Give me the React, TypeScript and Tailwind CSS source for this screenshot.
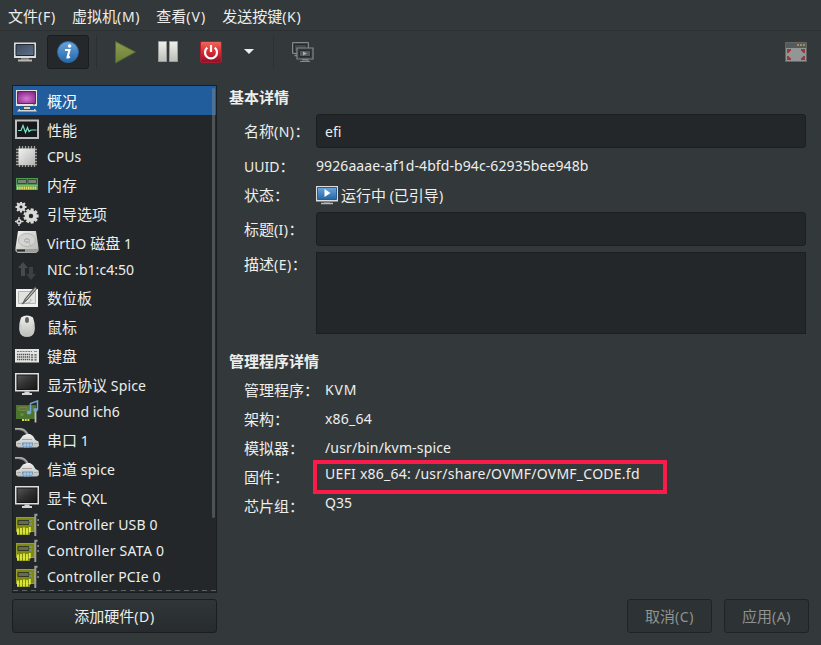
import React from "react";

const FONT = "font-['Noto_Sans','Noto_Sans_CJK_SC',sans-serif]";

/* Latin runs are set slightly smaller than the Chinese runs next to them. */
function T({ children, className = "" }: { children: string; className?: string }) {
  const runs = children.split(/([\u3000-\u303f\u4e00-\u9fff\uff00-\uffef]+)/).filter(Boolean);
  return (
    <span className={`whitespace-pre text-[14px] ${className}`}>
      {runs.map((r, i) =>
        /[\u4e00-\u9fff\uff00-\uffef]/.test(r) ? (
          <span key={i} className="text-[15px] tracking-normal leading-none">{r}</span>
        ) : (
          <React.Fragment key={i}>{r}</React.Fragment>
        ),
      )}
    </span>
  );
}

function Svg({ children, className = "size-6", box = "0 0 24 24" }: { children: React.ReactNode; className?: string; box?: string }) {
  return (
    <svg viewBox={box} className={`shrink-0 ${className}`} fill="none">
      {children}
    </svg>
  );
}

function Defs() {
  return (
    <svg className="absolute size-0">
      <defs>
        <radialGradient id="pink" cx=".5" cy=".6" r=".7"><stop stopColor="#d878d4" /><stop offset="1" stopColor="#7d2380" /></radialGradient>
        <linearGradient id="silver" x1="0" y1="0" x2="1" y2="1"><stop stopColor="#f2f2f0" /><stop offset="1" stopColor="#b4b4b2" /></linearGradient>
        <linearGradient id="down" x1="0" y1="0" x2="0" y2="1"><stop stopColor="#f0f0ee" /><stop offset="1" stopColor="#bdbdb9" /></linearGradient>
        <linearGradient id="black" x1="0" y1="0" x2="1" y2="1"><stop stopColor="#555" /><stop offset=".5" stopColor="#303030" /><stop offset="1" stopColor="#181818" /></linearGradient>
        <linearGradient id="slate" x1="0" y1="0" x2="1" y2="1"><stop stopColor="#3c4a5e" /><stop offset="1" stopColor="#60728c" /></linearGradient>
        <linearGradient id="blue" x1="0" y1="0" x2="0" y2="1"><stop stopColor="#6ba4dd" /><stop offset="1" stopColor="#2467a8" /></linearGradient>
        <linearGradient id="red" x1="0" y1="0" x2="0" y2="1"><stop stopColor="#ee6a5a" /><stop offset=".5" stopColor="#dc2b32" /><stop offset="1" stopColor="#86102e" /></linearGradient>
        <linearGradient id="olive" x1="0" y1="0" x2="0" y2="1"><stop stopColor="#8e9c50" /><stop offset="1" stopColor="#6c8038" /></linearGradient>
      </defs>
    </svg>
  );
}

function gear(cx: number, cy: number, r: number, n: number, tooth: number) {
  return (
    <g stroke="#d9d9d7">
      {Array.from({ length: n }, (_, i) => {
        const a = (i * 2 * Math.PI) / n;
        return <line key={i} x1={cx + r * Math.cos(a)} y1={cy + r * Math.sin(a)} x2={cx + (r + tooth) * Math.cos(a)} y2={cy + (r + tooth) * Math.sin(a)} strokeWidth={r * 0.6} />;
      })}
      <circle cx={cx} cy={cy} r={r * 0.8} strokeWidth={r * 0.75} />
    </g>
  );
}

const BlackScreen = () => (
  <Svg>
    <rect x="0" y="0" width="24" height="18.500" fill="#dededc" />
    <rect x="1.500" y="1.500" width="21" height="15.500" fill="#171717" />
    <rect x="2.500" y="2.500" width="19" height="13.500" fill="url(#black)" />
    <path d="M9.500 18.500h5v1.500h2.500v2h-10v-2h2.500z" fill="#d5d5d3" />
  </Svg>
);

const Card = () => (
  <Svg>
    <path d="M1 4h19v15h-5v3H2v-3H1z" fill="#7f8911" />
    <path d="M1.500 4.500h18v14h-18z" stroke="#97a129" />
    <path d="M3 7.500h11v4H3z" fill="#666b55" stroke="#343a22" />
    <path d="M14 8h3M14 11h3" stroke="#6b91b5" strokeWidth="1.500" />
    <path d="M3 21.500V15.500M6 21.500V15M9 21.500V14.500M12 21.500V15M14.800 19.500V14" stroke="#e4ee39" strokeWidth="1.800" />
    <path d="M22.500 1.700h-2.200V23" stroke="#9b9c9a" strokeWidth="2" />
    <path d="M22.300 7h1.700M22.300 12h1.700" stroke="#a0a0a0" strokeWidth="1.500" />
  </Svg>
);

const Plug = () => (
  <Svg>
    <path d="M0 1C7 0 11 2 13 8" stroke="#858785" strokeWidth="2.600" />
    <path d="M0 .7C7 0 11 2 13 7" stroke="#bcbdbb" />
    <path d="M8 7.500l4-1.500h3l3 2 2.500 4 3 1.500.5 4.500-2 1.500H3L1 18v-4.500L4.500 12z" fill="url(#down)" />
    <path d="M7 11.500h10M2 15.500h4M19 15.500h3.500" stroke="#a5a8a6" />
    <path d="M7 14.500h11v2.500l-2 2.500H9L7 17z" fill="#6b97c3" />
    <path d="M8 17h9M10 15v4.500M13 15v4.500M16 15v3.500" stroke="#c4dbef" strokeWidth=".8" />
  </Svg>
);

const ICONS: Record<string, React.ReactNode> = {
  overview: (
    <Svg>
      <path d="M1 1h21v16H1z" fill="#e2e2df" /><path d="M2.500 2.500h18v12h-18z" fill="url(#pink)" stroke="#63236a" />
      <path d="M9 18h6v2h5l2 2.500H2L4 20h5z" fill="#d6d6d2" /><path d="M9 17.500h6M5 20.500h14" stroke="#4b4f50" />
      <path d="M18 15.800h2" stroke="#5a9b45" />
    </Svg>
  ),
  performance: (
    <Svg>
      <path d="M0 1.500h24v19.500H0z" fill="#bdbebc" /><path d="M2 3.500h20v15.500H2z" fill="#15191b" />
      <path d="M3 12.500h3l2-5 2.500 7 2-5 1.500 4 2-1.500h5.500" stroke="#7de3c5" strokeWidth="1.200" />
    </Svg>
  ),
  cpu: (
    <Svg>
      <path d="M4.500 1v21M7.500 1v21M10.500 1v21M13.500 1v21M16.500 1v21M19.500 1v21M1 4.500h21M1 7.500h21M1 10.500h21M1 13.500h21M1 16.500h21M1 19.500h21" stroke="#a0a2a1" strokeWidth="1.300" />
      <path d="M3.500 3.500h16.500V20H3.500z" fill="url(#silver)" />
    </Svg>
  ),
  memory: (
    <Svg>
      <path d="M1 5h22v12H1z" fill="#4f9a52" /><path d="M2.500 6.500h9v4h-9zM13 6.500h8.500v4H13z" fill="#7b8178" stroke="#394c38" />
      <path d="M2 15h20" stroke="#e6dc62" strokeWidth="3" strokeDasharray="1.500 .7" />
      <path d="M1 12.500h22" stroke="#94b34a" />
    </Svg>
  ),
  boot: (
    <Svg>{gear(6, 5, 3.500, 8, 2)}{gear(16, 14, 5.200, 9, 2.400)}{gear(4, 19.500, 2.200, 4, 2.300)}</Svg>
  ),
  disk: (
    <Svg>
      <path d="M3 0h18l2.500 17v3L21 22H3l-2.500-2v-3z" fill="url(#silver)" /><ellipse cx="12" cy="9" rx="8.500" ry="6.500" fill="#d4d4d2" stroke="#b4b5b3" />
      <ellipse cx="12" cy="9.500" rx="2.500" ry="1.700" stroke="#a1a2a0" /><path d="M14 11l2 4-5 1" stroke="#b9b9b7" />
      <path d="M1 18h22v2l-2 1.500H3L1 20z" fill="#9c9d9b" /><path d="M2 19.500h8" stroke="#282b2c" strokeWidth="2" />
    </Svg>
  ),
  network: (
    <Svg>
      <path d="M8 4l5 6h-3v8H6v-8H3z" fill="#474a4b" /><path d="M14 9h4v7h3l-5 6-5-6h3z" fill="#3d4041" />
    </Svg>
  ),
  tablet: (
    <Svg>
      <path d="M1 3h22v18H1z" fill="#f1f1ef" /><path d="M3.500 5.500h17v12h-17z" fill="#e2e3e0" stroke="#b4b7b0" />
      <path d="M6 17C14 19 18 14 15 13" stroke="#a7aaa5" /><path d="M20 0.800L10 13 7.500 18l4-3.500L22 2.500z" fill="#777b78" stroke="#454946" strokeWidth=".8" />
      <path d="M20.500 2.500L11 13.500" stroke="#c8ccc9" />
    </Svg>
  ),
  mouse: (
    <Svg>
      <path d="M6 2.500Q12-1.500 18 2.500 20 8 19.800 14 19.500 19 16.500 21 12 23 7.500 21 4.500 19 4.200 14 4 8 6 2.500z" fill="url(#down)" />
      <path d="M6 9q-1 10 3.500 12M18 9q1 10-3.500 12" stroke="#c9c9c7" /><ellipse cx="12" cy="5" rx="2" ry="3" fill="#606362" />
    </Svg>
  ),
  keyboard: (
    <Svg>
      <path d="M0 5h24v13.500H0z" fill="#e4e4e2" /><path d="M2 10.500h13M2 13h13M2 15.500h13" stroke="#535655" strokeWidth="1.700" strokeDasharray="1.400 .6" />
      <path d="M2 7.500h15" stroke="#737574" strokeDasharray="2 .8" /><path d="M19 7.500h3" stroke="#54ac4b" />
      <path d="M17 10v7M20.500 10v7" stroke="#747675" strokeWidth="2.200" strokeDasharray="1.800 .7" />
    </Svg>
  ),
  screen: <BlackScreen />,
  sound: (
    <Svg>
      <path d="M1 5h20v14H1z" fill="#4b752e" /><path d="M2 6h17v4H2z" fill="#5d7635" />
      <path d="M4 7.500h8v3H4z" stroke="#74824b" /><circle cx="7" cy="14.500" r="1.600" fill="#6a8b49" />
      <path d="M7 20h8" stroke="#dfd83c" strokeWidth="2" strokeDasharray="2 .7" /><path d="M20.500 11v11.500" stroke="#bdbfbd" strokeWidth="1.800" />
      <path d="M15.500 12V3.500L22.500 1v9" stroke="#72a7c9" strokeWidth="1.500" /><ellipse cx="14" cy="12.500" rx="2.300" ry="1.900" fill="#72a7c9" /><ellipse cx="20.500" cy="10" rx="2.300" ry="1.900" fill="#72a7c9" />
    </Svg>
  ),
  plug: <Plug />,
  card: <Card />,
};

const ROWS: [string, string, boolean, string][] = [
  ["overview", "概况", true, ""],
  ["performance", "性能", true, ""],
  ["cpu", "CPUs", false, ""],
  ["memory", "内存", true, ""],
  ["boot", "引导选项", true, ""],
  ["disk", "VirtIO 磁盘 1", true, "tracking-[0.15px]"],
  ["network", "NIC :b1:c4:50", false, "tracking-[0.05px]"],
  ["tablet", "数位板", true, ""],
  ["mouse", "鼠标", true, ""],
  ["keyboard", "键盘", true, ""],
  ["screen", "显示协议 Spice", true, "tracking-[0.15px]"],
  ["sound", "Sound ich6", false, ""],
  ["plug", "串口 1", true, ""],
  ["plug", "信道 spice", true, "tracking-[0.15px]"],
  ["screen", "显卡 QXL", true, "tracking-[0.1px]"],
  ["card", "Controller USB 0", false, "tracking-[0.15px]"],
  ["card", "Controller SATA 0", false, "tracking-[0.28px]"],
  ["card", "Controller PCIe 0", false, "tracking-[0.15px]"],
];

function Toolbar() {
  return (
    <div className="flex h-[42px] items-center border-t border-[#2c3032] pl-[14px] pr-[14px]">
      <Svg className="size-[22px]" box="0 0 22 22">
        <path d="M0 1.500h22V17H0z" fill="#dcdcda" /><path d="M2 3.500h18v11H2z" fill="url(#slate)" stroke="#23282f" />
        <path d="M7 17h8v2H7z" fill="#777" /><path d="M4 18.500h14v2H4z" fill="#b8b8b4" />
      </Svg>
      <div className="ml-[11px] flex h-[34px] w-[42px] items-center justify-center rounded-[3px] border border-[#1a1d1f] bg-[#24282a]">
        <Svg className="size-[22px]" box="0 0 22 22">
          <circle cx="11" cy="11" r="10.500" fill="url(#blue)" stroke="#2b68a5" />
          <circle cx="12.600" cy="5" r="1.800" fill="#fff" />
          <path d="M8 9h4.500L10.500 16.500q1 .3 2.300-1" stroke="#fff" strokeWidth="2.100" />
        </Svg>
      </div>
      <div className="ml-[7px] h-[34px] w-px bg-[#2c3032]" />
      <Svg className="ml-[17px] size-[24px]" box="0 0 24 24"><path d="M1.500 1.500V23L21.500 12z" fill="url(#olive)" stroke="#53672b" /></Svg>
      <Svg className="ml-[19px] size-[22px]" box="0 0 22 22"><path d="M1.500.5h8v20h-8zM12.500.5h8v20h-8z" fill="url(#down)" stroke="#9c9d9b" /></Svg>
      <Svg className="ml-[21px] size-[22px]" box="0 0 22 22">
        <rect x=".5" y=".5" width="21" height="21" rx="1.500" fill="url(#red)" stroke="#ab1e32" />
        <path d="M7.300 6.700a6 6 0 1 0 7.400 0M11 4v7" stroke="#fff" strokeWidth="2.200" />
      </Svg>
      <Svg className="ml-[22px] h-[5px] w-[10px]" box="0 0 10 5"><path d="M0 0h10L5 5z" fill="#eeeeec" /></Svg>
      <div className="ml-[19px] h-[34px] w-px bg-[#2c3032]" />
      <Svg className="ml-[18px] size-[22px]" box="0 0 22 22">
        <path d="M.5 1.500h16v11H.5z" fill="#40474a" stroke="#858888" /><path d="M2.500 3.500h12v7h-12z" stroke="#25292c" /><path d="M2.500 14.500H5" stroke="#858888" strokeWidth="1.500" />
        <path d="M5 7h16v11H5z" fill="#34393b" stroke="#858888" strokeWidth="1.200" /><path d="M7.500 9.500h11v6h-11z" fill="#525a60" stroke="#272b2e" />
        <path d="M11 10.500v4l4-2z" fill="#a9acab" /><path d="M10 18.500h6v1.500h-6M8 20.500h10" stroke="#858888" />
      </Svg>
      <Svg className="ml-auto h-[20px] w-[22px]" box="0 0 22 20">
        <path d="M.5.500h21v19H.5z" fill="#929695" stroke="#626667" /><path d="M1 1h20v5H1z" fill="#555a5a" />
        <path d="M12 3h2M15 3h2M18 3h2" stroke="#b08a4d" strokeWidth="1.800" />
        <path d="M2 7h4v2H5V10H4v1H2zM20 7h-4v2h1V10h1v1h2zM2 18h4v-2H5V15H4v-1H2zM20 18h-4v-2h1V15h1v-1h2z" fill="#943c41" />
      </Svg>
    </div>
  );
}

function Detail({ label, value, up = "" }: { label: string; value: string; up?: string }) {
  return (
    <div className="flex h-[29px] leading-[29px]">
      <T className="w-[81px]">{label}</T>
      <T className={up}>{value}</T>
    </div>
  );
}

export default function App() {
  return (
    <div className={`relative flex h-[645px] w-[821px] flex-col overflow-hidden bg-[#33393b] text-[#eeeeec] ${FONT}`}>
      <Defs />
      <nav className="flex h-[30px] shrink-0 gap-[16px] pl-[8px] leading-[33px] tracking-[0.75px]">
        <T>文件(F)</T><T>虚拟机(M)</T><T className="tracking-[1px]">查看(V)</T><T>发送按键(K)</T>
      </nav>
      <Toolbar />
      <main className="flex pl-[12px] pt-[13px]">
        <aside className="w-[205px] shrink-0">
          <div className="relative h-[508px] overflow-hidden border border-[#1c1f21] bg-[#232729]">
            {ROWS.map(([icon, label, tall, spacing], i) => (
              <div key={i} className={`flex items-center pl-[2px] ${tall ? "h-[29px] leading-[29px]" : "h-[26px] leading-[26px]"} ${i === 0 ? "bg-[#215d9c] text-white" : ""}`}>
                {ICONS[icon]}
                <T className={`ml-[8px] ${tall ? "pt-[2px]" : ""} ${spacing}`}>{label}</T>
              </div>
            ))}
            <div className="absolute right-[1px] top-[2px] h-[430px] w-[3px] rounded bg-[#8d9699]/40" />
            <div className="absolute bottom-[1px] left-0 h-px w-full bg-[repeating-linear-gradient(90deg,#5c6163_0_5px,transparent_5px_9px)]" />
          </div>
          <button className="mt-[6px] flex h-[34px] w-full items-center justify-center rounded-[3px] border border-[#1b1e20] bg-linear-to-b from-[#303638] to-[#272b2d]">
            <T className="tracking-[0.6px]">添加硬件(D)</T>
          </button>
        </aside>
        <section className="ml-[12px] w-[577px]">
          <h2 className="h-[29px] font-bold leading-[25px]"><T>基本详情</T></h2>
          <div className="pl-[15px]">
            <div className="flex h-[34px] leading-[35px]">
              <T className="w-[72px] tracking-[0.5px]">名称(N)：</T>
              <div className="w-[490px] rounded-[3px] border border-[#1c1f21] bg-[#232729] pl-[8px] leading-[33px]"><T>efi</T></div>
            </div>
            <div className="flex h-[34px] leading-[37px]">
              <T className="w-[72px]">UUID：</T><T className="leading-[35px] tracking-[0.09px]">9926aaae-af1d-4bfd-b94c-62935bee948b</T>
            </div>
            <div className="flex h-[30px] leading-[28px]">
              <T className="w-[72px]">状态：</T>
              <Svg className="mt-[4px] size-[22px]" box="0 0 22 22">
                <path d="M0 0h22v15.500H0z" fill="#deded9" /><path d="M1.500 1.500h19v12h-19z" fill="url(#blue)" stroke="#295c92" />
                <path d="M8.500 3v8l6-4z" fill="#fff" /><path d="M8 15.500h6V17H8z" fill="#747777" /><path d="M5 17.500h12" stroke="#b8b8b4" strokeWidth="1.500" />
              </Svg>
              <T className="ml-[3px]">运行中 (已引导)</T>
            </div>
            <div className="flex h-[34px] leading-[35px]">
              <T className="w-[72px] tracking-[0.4px]">标题(I)：</T>
              <div className="w-[490px] rounded-[3px] border border-[#1c1f21] bg-[#232729]" />
            </div>
            <div className="mt-[6px] flex h-[82px] leading-[26px]">
              <T className="w-[72px] tracking-[0.5px]">描述(E)：</T>
              <div className="w-[490px] border border-[#1c1f21] bg-[#232729]" />
            </div>
          </div>
          <h2 className="mt-[15px] h-[27px] font-bold leading-[25px]"><T>管理程序详情</T></h2>
          <div className="pl-[15px]">
            <Detail label="管理程序：" value="KVM" up="leading-[27px] tracking-[0.8px]" />
            <Detail label="架构：" value="x86_64" up="leading-[27px] tracking-[0.2px]" />
            <Detail label="模拟器：" value="/usr/bin/kvm-spice" up="leading-[27px] tracking-[0.15px]" />
            <Detail label="固件：" value="UEFI x86_64: /usr/share/OVMF/OVMF_CODE.fd" up="leading-[22px] tracking-[0.25px]" />
            <Detail label="芯片组：" value="Q35" up="leading-[22px]" />
          </div>
          <div className="mt-[78px] flex justify-end gap-[12px] text-[#909392]">
            <button className="flex h-[34px] w-[85px] items-center justify-center rounded-[3px] border border-[#1f2325] bg-[#2d3234]"><T className="tracking-[0.6px]">取消(C)</T></button>
            <button className="-mr-[3px] flex h-[34px] w-[85px] items-center justify-center rounded-[3px] border border-[#1f2325] bg-[#2d3234]"><T className="tracking-[0.6px]">应用(A)</T></button>
          </div>
        </section>
      </main>
      <div className="absolute left-[313px] top-[460px] h-[34px] w-[354px] border-4 border-[#fb1b4b]" />
    </div>
  );
}
